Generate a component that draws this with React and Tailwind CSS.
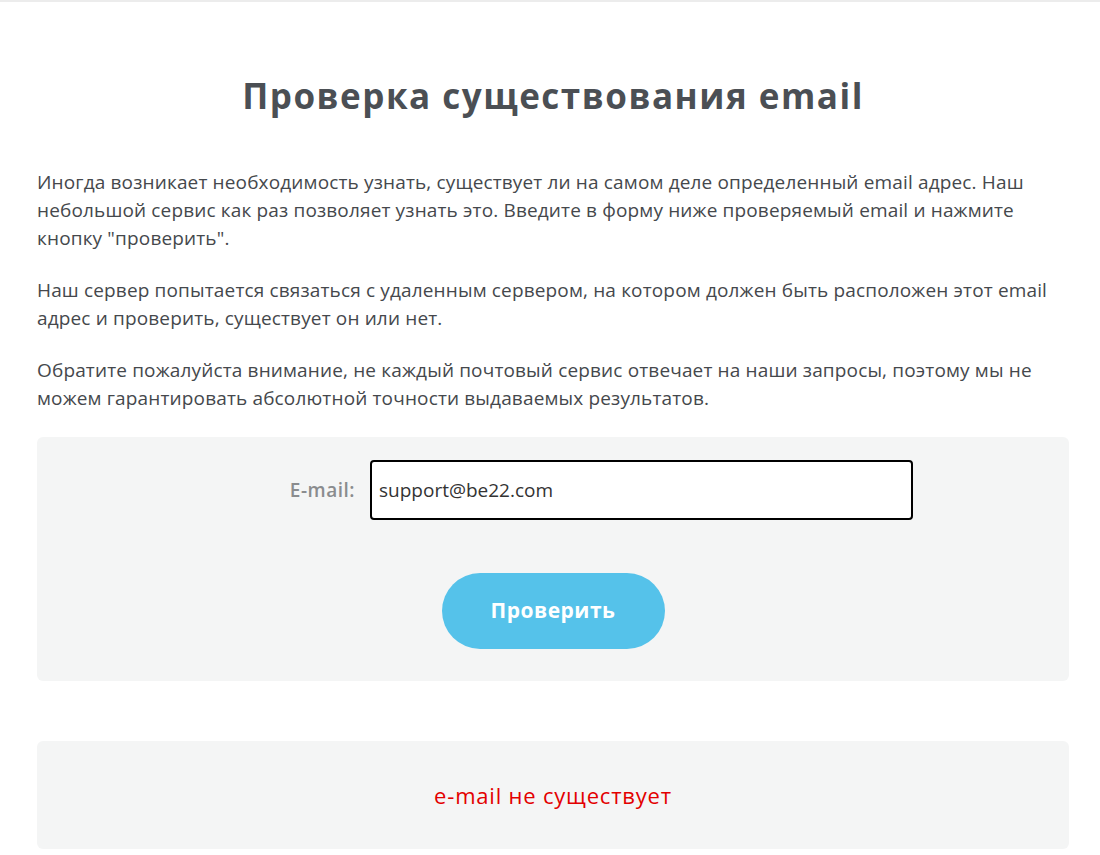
import React, { useState } from "react";

export default function App() {
  const [email, setEmail] = useState("support@be22.com");

  return (
    <div className="min-h-[855px] bg-white border-t-2 border-[#ececec] font-['Open_Sans',sans-serif]">
      <div className="ml-[37px] w-[1032px]">
        {/* Title */}
        <h1 className="pt-[72px] text-center text-[35px] leading-[44px] tracking-[1.5px] font-bold text-[#4b4f54]">
          Проверка существования email
        </h1>

        {/* Intro text */}
        <div className="mt-[50px] text-[19px] leading-[28px] tracking-[0.15px] text-[#45484c] flex flex-col gap-[24px]">
          <p>
            Иногда возникает необходимость узнать, существует ли на самом деле определенный email адрес. Наш
            небольшой сервис как раз позволяет узнать это. Введите в форму ниже проверяемый email и нажмите
            кнопку "проверить".
          </p>
          <p>
            Наш сервер попытается связаться с удаленным сервером, на котором должен быть расположен этот email
            адрес и проверить, существует он или нет.
          </p>
          <p>
            Обратите пожалуйста внимание, не каждый почтовый сервис отвечает на наши запросы, поэтому мы не
            можем гарантировать абсолютной точности выдаваемых результатов.
          </p>
        </div>

        {/* Form */}
        <form
          className="mt-[25px] rounded-md bg-[#f4f5f5] pt-[23px] pb-[32px] flex flex-col items-center"
          onSubmit={(e) => e.preventDefault()}
        >
          <div className="flex items-center">
            <label className="w-[333px] pr-[15px] text-right text-[19px] tracking-[0.5px] font-semibold text-[#8a8c8e]">
              E-mail:
            </label>
            <input
              type="text"
              value={email}
              onChange={(e) => setEmail(e.target.value)}
              className="w-[543px] h-[60px] rounded-[4px] border-2 border-black bg-white px-[7px] text-[19px] text-[#333] outline-none"
            />
            <div className="w-[156px]" />
          </div>
          <button
            type="submit"
            className="mt-[53px] w-[223px] h-[76px] rounded-full bg-[#55c2ea] text-white text-[21px] tracking-[0.5px] font-bold"
          >
            Проверить
          </button>
        </form>

        {/* Result */}
        <div className="mt-[60px] h-[108px] rounded-md bg-[#f4f5f5] flex items-center justify-center">
          <span className="text-[22px] tracking-[0.8px] font-medium text-[#e30000]">e-mail не существует</span>
        </div>
      </div>
    </div>
  );
}
